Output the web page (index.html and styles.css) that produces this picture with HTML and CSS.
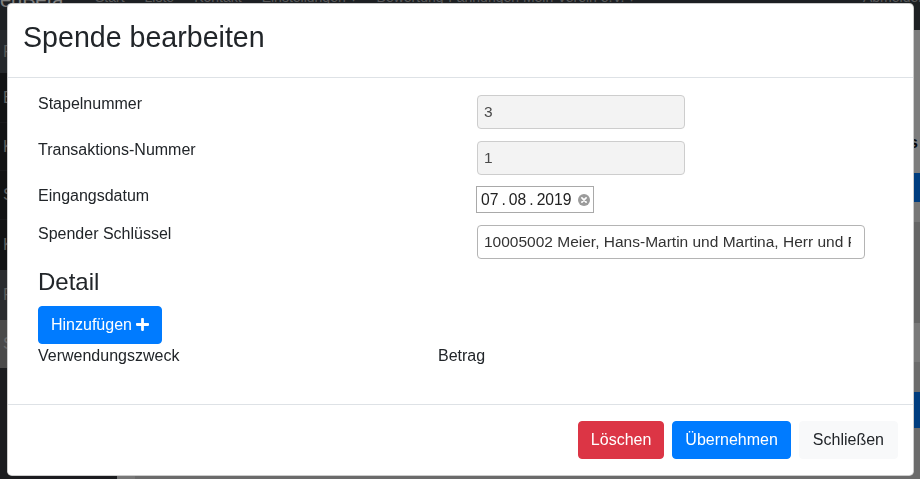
FILE: index.html
```html
<!DOCTYPE html>
<html lang="de">
<head>
<meta charset="utf-8">
<title>Spende bearbeiten</title>
<link rel="stylesheet" href="styles.css">
</head>
<body>
<div class="page">
  <nav class="navbar">
    <span class="brand">enBeta</span>
    <span class="nav-link">Start</span>
    <span class="nav-link">Liste</span>
    <span class="nav-link">Kontakt</span>
    <span class="nav-link">Einstellungen ▾</span>
    <span class="nav-link">Bewertung-Fahnungen Mein Verein e.V. ▾</span>
    <span class="nav-link nav-right">Abmelden</span>
  </nav>
  <div class="layout">
    <aside class="sidebar">
      <div class="side-item side-a">Favoriten</div>
      <div class="side-group">
        <div class="side-item h50">Eingang</div>
        <div class="side-item h48">Kontakte</div>
        <div class="side-item h49">Spenden</div>
        <div class="side-item h50 last">Kampagnen</div>
      </div>
      <div class="side-item side-b">Finanzen</div>
      <div class="side-item side-c">Stapel</div>
    </aside>
    <div class="gutter"></div>
    <main class="main">
      <div class="band band-top"><span class="band-title">Details</span></div>
      <div class="band band-blue b29"></div>
      <div class="band b20 c-ee"></div>
      <div class="band b101 c-cc"></div>
      <div class="band b39 c-f4"></div>
      <div class="band b30 c-d8"></div>
      <div class="band band-blue b36"></div>
      <div class="band band-rest"></div>
    </main>
  </div>
</div>

<div class="backdrop"></div>

<div class="modal" role="dialog" aria-labelledby="modal-title">
  <div class="modal-header">
    <h3 class="modal-title" id="modal-title">Spende bearbeiten</h3>
  </div>
  <div class="modal-body">
    <div class="form-grid">
      <label class="form-label">Stapelnummer</label>
      <input class="form-control is-readonly w-num" value="3" readonly>

      <label class="form-label">Transaktions-Nummer</label>
      <input class="form-control is-readonly w-num" value="1" readonly>

      <label class="form-label">Eingangsdatum</label>
      <div class="date-input">
        <span>07</span><span class="date-sep">.</span><span>08</span><span class="date-sep">.</span><span>2019</span>
        <svg class="date-clear" width="12" height="12" viewBox="0 0 12 12" aria-hidden="true">
          <circle cx="6" cy="6" r="6" fill="#9b9b9b"/>
          <path d="M3.9 3.9 L8.1 8.1 M8.1 3.9 L3.9 8.1" stroke="#fff" stroke-width="1.7" stroke-linecap="round"/>
        </svg>
      </div>

      <label class="form-label">Spender Schlüssel</label>
      <input class="form-control w-wide" value="10005002 Meier, Hans-Martin und Martina, Herr und Frau">
    </div>

    <h4 class="section-title">Detail</h4>
    <button class="btn btn-primary btn-add" type="button">Hinzufügen
      <svg class="icon-plus" width="13" height="13" viewBox="0 32 448 448" aria-hidden="true">
        <path fill="#fff" d="M416 208H272V64c0-17.670-14.330-32-32-32h-32c-17.670 0-32 14.330-32 32v144H32c-17.670 0-32 14.330-32 32v32c0 17.670 14.330 32 32 32h144v144c0 17.670 14.330 32 32 32h32c17.670 0 32-14.330 32-32V304h144c17.670 0 32-14.330 32-32v-32c0-17.670-14.330-32-32-32z"/>
      </svg>
    </button>
    <div class="detail-head">
      <span class="col-zweck">Verwendungszweck</span>
      <span class="col-betrag">Betrag</span>
    </div>
  </div>
  <div class="modal-footer">
    <button class="btn btn-danger" type="button">Löschen</button>
    <button class="btn btn-primary" type="button">Übernehmen</button>
    <button class="btn btn-light" type="button">Schließen</button>
  </div>
</div>
</body>
</html>
```

FILE: styles.css
```css
* { box-sizing: border-box; }

html, body {
  margin: 0;
  height: 100%;
}

body {
  font-family: "Liberation Sans", Arial, sans-serif;
  font-size: 16px;
  line-height: 1.5;
  color: #212529;
  background: #d4d4d4;
  overflow: hidden;
}

/* ---------- background page ---------- */
.page {
  height: 479px;
  display: flex;
  flex-direction: column;
}

.navbar {
  flex: none;
  height: 30px;
  background: #3b4046;
  display: flex;
  align-items: flex-start;
  gap: 20px;
  overflow: hidden;
  white-space: nowrap;
}

.brand {
  width: 75px;
  font-size: 20px;
  line-height: 20px;
  margin-top: -10px;
  color: #ffffff;
}

.nav-link {
  font-size: 14px;
  line-height: 16px;
  margin-top: -11px;
  color: rgba(255, 255, 255, 0.6);
}

.nav-right {
  margin-left: auto;
  margin-right: -6px;
}

.layout {
  flex: 1;
  display: flex;
  min-height: 0;
}

.sidebar {
  width: 117px;
  flex: none;
  background: #36393e;
  color: #bdbdbd;
  display: flex;
  flex-direction: column;
}

.side-item {
  padding-left: 3px;
  display: flex;
  align-items: center;
  font-size: 16px;
}

.side-a { height: 43px; background: #4a5056; color: #b0b0b0; }
.side-group { background: #242628; }
.side-group .side-item { border-bottom: 1px solid #303236; }
.side-group .side-item.last { border-bottom: 0; }
.h48 { height: 48px; }
.h49 { height: 49px; }
.h50 { height: 50px; }
.side-b { height: 50px; background: #55595f; color: #b8b8b8; }
.side-c { height: 48px; background: #949494; color: #d6d6d6; }

.gutter {
  width: 18px;
  flex: none;
  background: #eeeeee;
}

.main {
  flex: 1;
  display: flex;
  flex-direction: column;
}

.band { flex: none; }
.band-top {
  height: 143px;
  background: #fafafa;
  padding-top: 101px;
  padding-right: 2px;
  text-align: right;
}
.band-title {
  font-weight: 700;
  font-size: 16px;
  line-height: 24px;
  color: #111;
}
.band-blue { background: #007bff; }
.b20 { height: 20px; }
.b29 { height: 29px; }
.b30 { height: 30px; }
.b36 { height: 36px; }
.b39 { height: 39px; }
.b101 { height: 101px; }
.c-ee { background: #eeeeee; }
.c-cc { background: #cccccc; }
.c-f4 { background: #f4f4f4; }
.c-d8 { background: #d8d8d8; }
.band-rest { flex: 1; background: #d6d6d6; }

.backdrop {
  position: fixed;
  inset: 0;
  background: rgba(0, 0, 0, 0.5);
}

/* ---------- modal ---------- */
.modal {
  position: fixed;
  left: 7px;
  top: 3px;
  width: 907px;
  background: #fff;
  border: 1px solid rgba(0, 0, 0, 0.2);
  border-radius: 4.8px;
  display: flex;
  flex-direction: column;
}

.modal-header {
  padding: 16px 15px;
  border-bottom: 1px solid #dee2e6;
}

.modal-title {
  margin: 0 0 7px;
  font-size: 28.6px;
  font-weight: 400;
  line-height: 34px;
  color: #212529;
}

.modal-body {
  padding: 17px 16px 16px 30px;
}

.form-grid {
  display: grid;
  grid-template-columns: 439px 1fr;
  row-gap: 12px;
  align-items: start;
}

.form-label {
  margin-top: -3px;
  line-height: 24px;
  font-size: 16px;
}

.form-control {
  display: block;
  height: 34px;
  padding: 0 13px 0 6px;
  font-family: "Liberation Sans", Arial, sans-serif;
  font-size: 15.5px;
  color: #495057;
  background: #fff;
  border: 1px solid #b4b4b4;
  border-radius: 4px;
  outline: none;
}

.is-readonly {
  background: #f3f3f3;
  border-color: #cdcdcd;
  color: #4a4a4a;
}

.w-num { width: 208px; }
.w-wide { width: 388px; color: #333; }

.date-input {
  margin-top: -1px;
  margin-left: -1px;
  width: 118px;
  height: 27px;
  border: 1px solid #a9a9a9;
  background: #fff;
  display: flex;
  align-items: center;
  padding-left: 4px;
  font-size: 15.7px;
  color: #222;
  line-height: 1;
}

.date-sep { padding: 0 3px; }

.date-clear {
  margin-left: 6px;
  flex: none;
}

.section-title {
  margin: 9px 0 9px;
  font-size: 24px;
  font-weight: 400;
  line-height: 1.2;
}

.btn {
  display: inline-flex;
  align-items: center;
  height: 38px;
  padding: 0 12px;
  font-family: "Liberation Sans", Arial, sans-serif;
  font-size: 16px;
  line-height: 24px;
  border: 1px solid transparent;
  border-radius: 4px;
  cursor: pointer;
}

.btn-primary { background: #007bff; border-color: #007bff; color: #fff; }
.btn-danger { background: #dc3545; border-color: #dc3545; color: #fff; }
.btn-light { background: #f8f9fa; border-color: #f8f9fa; color: #212529; padding: 0 13px; }

.btn-add { padding: 0 12px; }

.icon-plus { margin-left: 4px; }

.detail-head {
  display: flex;
  line-height: 24px;
  margin-bottom: 20px;
}

.col-zweck { width: 400px; }

.modal-footer {
  border-top: 1px solid #dee2e6;
  padding: 16px 15px;
  display: flex;
  justify-content: flex-end;
  gap: 8px;
}
```
